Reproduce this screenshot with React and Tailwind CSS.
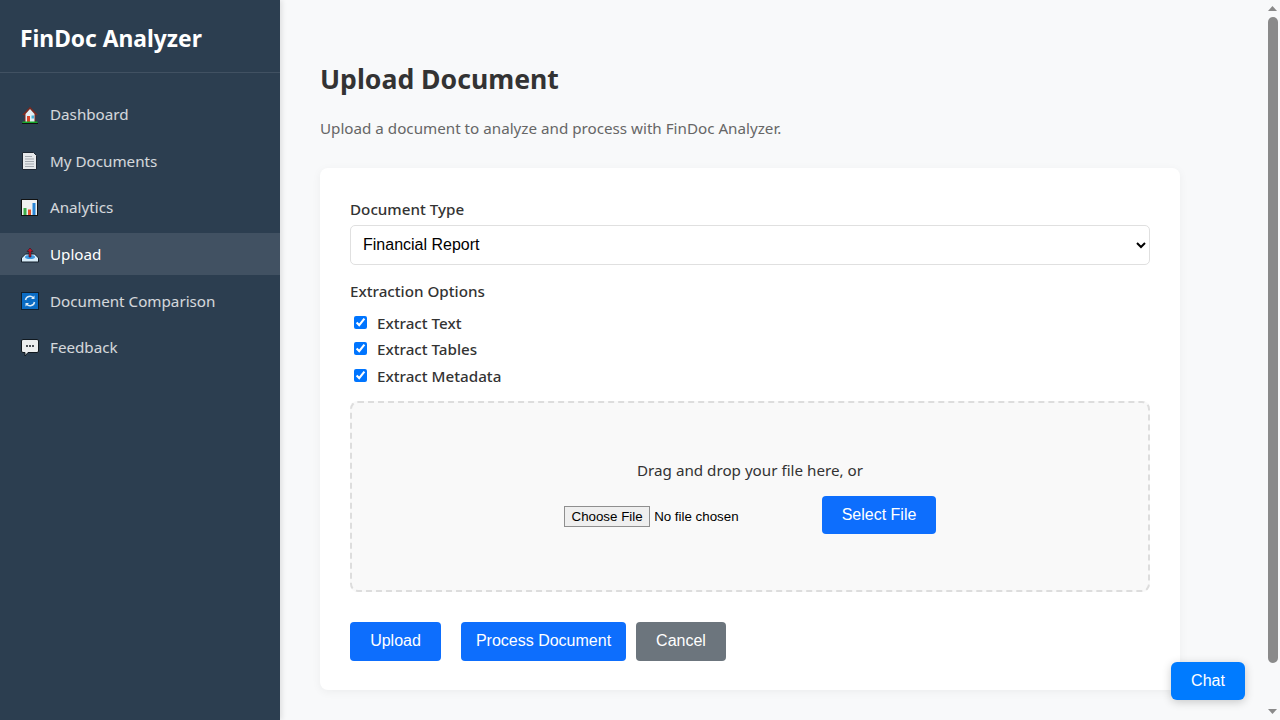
import React from "react";

const HomeIcon = () => (
  <svg width="18" height="18" viewBox="0 0 18 18">
    <path d="M9 .8 1 9h2.500v7h11V9H17z" fill="#7a2a20" />
    <path d="M9 3 4.500 8v8h9V8z" fill="#e4eff4" />
    <rect x="6" y="10" width="3" height="6" fill="#d9442c" />
    <rect x="10.500" y="9.500" width="2.500" height="3" fill="#45b4dc" />
    <rect x="1.500" y="15.500" width="15" height="1.500" fill="#16a82c" />
    <rect x="1" y="17" width="16" height="1" fill="#111" />
  </svg>
);

const DocIcon = () => (
  <svg width="18" height="18" viewBox="0 0 18 18">
    <path d="M1.500 .5h11l3 3v14h-14z" fill="#e6e8ea" stroke="#1d2530" strokeWidth="1" />
    <path d="M4 4.500h7M4 7h9M4 9.500h9M4 12h9M4 14.500h9" stroke="#a3a8ae" strokeWidth="1" />
  </svg>
);

const ChartIcon = () => (
  <svg width="18" height="18" viewBox="0 0 18 18">
    <rect x=".5" y=".5" width="16" height="16" fill="#f0f1f1" stroke="#111" strokeWidth="1" />
    <rect x="2.500" y="9" width="3" height="7" fill="#3fae49" />
    <rect x="7" y="10.500" width="3" height="5.500" fill="#e2512b" />
    <rect x="11.500" y="4" width="3" height="12" fill="#2b86d6" />
  </svg>
);

const UploadIcon = () => (
  <svg width="18" height="18" viewBox="0 0 18 18">
    <path d="M4.500 9 .5 13v4h17v-4l-4-4z" fill="#d8ecf8" stroke="#15202c" strokeWidth="1" />
    <ellipse cx="9" cy="12" rx="5" ry="2" fill="#3d97e0" />
    <path d="M9 3 6 6.500h2V12h2V6.500h2z" fill="#c4122a" stroke="#2a1a22" strokeWidth=".6" />
  </svg>
);

const CompareIcon = () => (
  <svg width="18" height="18" viewBox="0 0 18 18">
    <rect x=".5" y=".5" width="17" height="17" fill="#0b6cc4" stroke="#10202f" strokeWidth="1" />
    <path d="M4.500 8a4.500 4.500 0 0 1 7.800-2.200M13.500 10a4.500 4.500 0 0 1-7.800 2.200" fill="none" stroke="#dcebf6" strokeWidth="1.500" />
    <path d="M13.500 3.500v3.500H10zM4.500 14.500V11H8z" fill="#dcebf6" />
  </svg>
);

const ChatIcon = () => (
  <svg width="18" height="18" viewBox="0 0 18 18">
    <path d="M2 .5h14a1.500 1.500 0 0 1 1.500 1.500v10a1.500 1.500 0 0 1-1.500 1.500H7l-3 3.500v-3.500H2A1.500 1.500 0 0 1 .5 12V2A1.500 1.500 0 0 1 2 .5z" fill="#eceeef" stroke="#10181f" strokeWidth="1" />
    <rect x="5" y="6" width="2" height="2" fill="#4a4f55" />
    <rect x="8" y="6" width="2" height="2" fill="#4a4f55" />
    <rect x="11" y="6" width="2" height="2" fill="#4a4f55" />
  </svg>
);

const navItems = [
  { label: "Dashboard", icon: <HomeIcon /> },
  { label: "My Documents", icon: <DocIcon /> },
  { label: "Analytics", icon: <ChartIcon /> },
  { label: "Upload", icon: <UploadIcon />, active: true },
  { label: "Document Comparison", icon: <CompareIcon /> },
  { label: "Feedback", icon: <ChatIcon /> },
];

const options = ["Extract Text", "Extract Tables", "Extract Metadata"];

function App() {
  return (
    <div className="relative flex h-screen overflow-hidden bg-[#f8f9fa] font-['Noto_Sans',sans-serif] text-[#333]">
      {/* sidebar */}
      <aside className="w-[280px] shrink-0 bg-[#2c3e50] text-white shadow-[2px_0_5px_rgba(0,0,0,0.1)]">
        <div className="flex h-[73px] items-center border-b border-white/10 px-5 pt-[6px]">
          <h2 className="text-[22.800px] font-bold">FinDoc Analyzer</h2>
        </div>
        <nav className="flex flex-col gap-[4.6px] pt-[20.600px]">
          {navItems.map((item) => (
            <a
              key={item.label}
              className={
                item.active
                  ? "flex h-[42px] items-center gap-[11px] bg-white/10 px-[21px] text-[15.200px] text-white"
                  : "flex h-[42px] items-center gap-[11px] px-[21px] text-[15.200px] text-white/80"
              }
            >
              {item.icon}
              <span>{item.label}</span>
            </a>
          ))}
        </nav>
      </aside>

      {/* main */}
      <main className="min-w-0 flex-1 px-10 pt-[60px]">
        <h1 className="text-[26.600px] leading-[38px] font-bold text-[#333]">Upload Document</h1>
        <p className="mt-[19px] text-[15.200px] leading-[22px] text-[#666]">
          Upload a document to analyze and process with FinDoc Analyzer.
        </p>

        <div className="mt-[29px] h-[522px] w-[860px] rounded-lg bg-white p-[30px] shadow-[0_2px_10px_rgba(0,0,0,0.05)]">
          <label className="block text-[15.200px] leading-[22px] font-medium">Document Type</label>
          <select className="mt-[5px] block h-10 w-full rounded-[5px] border border-[#e0e0e0] bg-white px-2 pb-[2px] font-['Liberation_Sans',sans-serif] text-[16px] text-black">
            <option>Financial Report</option>
          </select>

          <div className="mt-[15px] text-[15.200px] leading-[22px] font-medium">Extraction Options</div>
          <div className="mt-[8px] flex flex-col">
            {options.map((opt) => (
              <label key={opt} className="flex h-[26.500px] items-center text-[15.200px] font-medium">
                <input type="checkbox" defaultChecked className="mr-[10px] ml-1 h-[13px] w-[13px] -translate-y-px accent-[#0075ff]" />
                {opt}
              </label>
            ))}
          </div>

          <div className="mt-[11px] flex h-[191px] flex-col items-center justify-center rounded-lg border-2 border-dashed border-[#ddd] bg-[#f9f9f9]">
            <p className="text-[15.200px] leading-[22px]">Drag and drop your file here, or</p>
            <div className="mt-[15px] flex items-center gap-[5px]">
              <input
                type="file"
                className="mt-[3px] w-[253px] font-['Liberation_Sans',sans-serif] text-[13.333px] leading-normal text-black file:mr-[4px] file:h-[21px] file:rounded-none file:border file:border-[#8f8f8f] file:bg-[#efefef] file:px-[6.500px] file:py-0 file:leading-[17px] file:text-black"
              />
              <button className="h-[38px] w-[114px] rounded bg-[#0d6efd] pt-px font-['Liberation_Sans',sans-serif] text-[16px] text-white">
                Select File
              </button>
            </div>
          </div>

          <div className="mt-[30px] flex font-['Liberation_Sans',sans-serif] text-[16px] text-white">
            <button className="mr-5 h-[39px] w-[91px] rounded bg-[#0d6efd]">Upload</button>
            <button className="mr-[10px] h-[39px] w-[165px] rounded bg-[#0d6efd]">Process Document</button>
            <button className="h-[39px] w-[90px] rounded bg-[#6c757d]">Cancel</button>
          </div>
        </div>
      </main>

      {/* page scrollbar */}
      <div className="flex w-[15px] shrink-0 flex-col items-center bg-[#f8f9fa]">
        <svg width="15" height="17" viewBox="0 0 15 17" className="shrink-0">
          <path d="M7.500 6 3 11h9z" fill="#8a8a8a" />
        </svg>
        <div className="h-[646px] w-[10px] shrink-0 rounded-[5px] bg-[#8a8a8a]" />
        <div className="flex-1" />
        <svg width="15" height="17" viewBox="0 0 15 17" className="shrink-0">
          <path d="M3 6h9l-4.500 5z" fill="#8a8a8a" />
        </svg>
      </div>

      <button className="absolute top-[662px] left-[1171px] h-[38px] w-[74px] rounded-md bg-[#007bff] font-['Liberation_Sans',sans-serif] text-[16px] text-white shadow-[0_2px_10px_rgba(0,0,0,0.2)]">
        Chat
      </button>
    </div>
  );
}

export default App;
